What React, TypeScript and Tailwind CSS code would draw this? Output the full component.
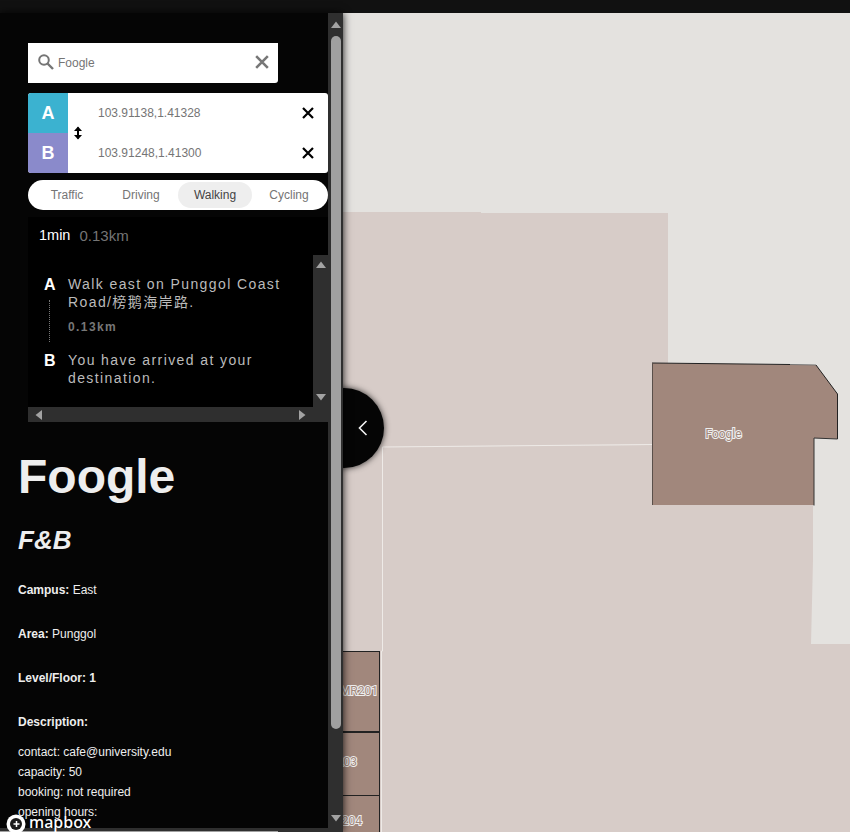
const sans = "font-['Liberation_Sans',Arial,'Noto_Sans_CJK_SC',sans-serif]";

function Arrow({ dir, className = "" }: { dir: "up" | "down" | "left" | "right"; className?: string }) {
  const pts = {
    up: "0,8 5,1.5 10,8",
    down: "0,2 5,8.5 10,2",
    left: "8,0 1.5,5 8,10",
    right: "2,0 8.5,5 2,10",
  }[dir];
  return (
    <svg width="10" height="10" viewBox="0 0 10 10" className={className}>
      <polygon points={pts} fill="#a3a3a3" />
    </svg>
  );
}

function Cross({ size = 12, color = "#000", w = 2.2 }: { size?: number; color?: string; w?: number }) {
  return (
    <svg width={size} height={size} viewBox="0 0 12 12">
      <path d="M1 1 L11 11 M11 1 L1 11" stroke={color} strokeWidth={w} fill="none" />
    </svg>
  );
}

function MapCanvas() {
  const label = { paintOrder: "stroke" as const };
  return (
    <svg width="850" height="832" viewBox="0 0 850 832" className="absolute left-0 top-0">
      <rect width="850" height="832" fill="#e4e2df" />
      <polygon points="340,212 481,212 481,213 668,213 668,363 652,363 652,445 383,447 383,651 340,651" fill="#d7ccc8" />
      <polygon points="383,447 652,445 652,505 813,505 813,560 811,644 850,644 850,832 340,832 340,651 381,651" fill="#d7ccc8" />
      <path d="M381.5 832 L381.5 651 L382.5 651 L382.5 447 L652 444.5" stroke="#eeeae7" strokeWidth="1" fill="none" />
      <polygon points="652.5,363 816,365 837.5,394 837.5,439 814,438 814,505 652.5,505" fill="#a1877c" />
      <path d="M652 363 L790 364.5" stroke="#222" strokeWidth="1" fill="none" />
      <path d="M790 364.5 L816 365" stroke="#777" strokeWidth="1" fill="none" />
      <path d="M816 365 L837.5 394 L837.5 439" stroke="#222" strokeWidth="1" fill="none" />
      <path d="M837.5 439 L814 438 L814 505.5" stroke="#333" strokeWidth="1" fill="none" />
      <path d="M652.5 363 L652.5 505" stroke="#5a4f4a" strokeWidth="1" fill="none" />
      <rect x="340" y="651.5" width="39.5" height="80" fill="#a1877c" stroke="#222" strokeWidth="1" />
      <rect x="340" y="732.5" width="39.5" height="63" fill="#a1877c" stroke="#222" strokeWidth="1" />
      <rect x="340" y="795.5" width="39.5" height="40" fill="#a1877c" stroke="#222" strokeWidth="1" />
      <g fontFamily="Roboto, sans-serif" fontSize="12" fill="#a1877c" stroke="#eee" strokeWidth="2" style={label}>
        <text x="723.5" y="438" textAnchor="middle">Foogle</text>
        <text x="378" y="695" textAnchor="end">MR201</text>
        <text x="357" y="766" textAnchor="end">203</text>
        <text x="362" y="825" textAnchor="end">204</text>
      </g>
    </svg>
  );
}

function Info({ k, v, boldValue }: { k: string; v?: string; boldValue?: boolean }) {
  return (
    <p className="mb-6 h-5 text-xs leading-5 text-[#eee]">
      <b>{k}</b> {boldValue ? <b>{v}</b> : v}
    </p>
  );
}

export default function App() {
  return (
    <div className={`relative h-[832px] w-[850px] overflow-hidden bg-[#e4e2df] ${sans}`}>
      <MapCanvas />
      <div className="absolute left-[304px] top-[388px] flex h-20 w-20 items-center justify-end rounded-full bg-[#050505] pr-[16px] shadow-[0_0_6px_rgba(0,0,0,0.8)]">
        <svg width="10" height="16" viewBox="0 0 10 16">
          <path d="M8.5 1 L1.5 8 L8.5 15" stroke="#f2f2f2" strokeWidth="1.6" fill="none" />
        </svg>
      </div>

      <div className="relative flex h-full flex-col">
        <div className="h-[13px] w-full bg-[#111]" />
        <div className="flex h-[819px] w-[343px] shadow-[0_0_8px_rgba(0,0,0,0.9)]">
          <div className="relative flex w-[328px] flex-col overflow-hidden bg-[#050505]">
            <div className="flex-1 overflow-hidden">
              <div className="flex flex-col pl-7 pt-[30px]">
                <div className="flex h-10 w-[250px] items-center rounded-br-[3px] bg-white">
                  <svg width="18" height="18" viewBox="0 0 18 18" className="ml-[9px] mb-[3px]">
                    <circle cx="7" cy="7" r="4.8" stroke="#757575" strokeWidth="2" fill="none" />
                    <path d="M10.5 10.5 L16 16" stroke="#757575" strokeWidth="2.4" fill="none" />
                  </svg>
                  <span className="ml-[3px] flex-1 text-xs text-[#757575]">Foogle</span>
                  <span className="mr-[9px] mb-[2px] flex">
                    <Cross size={14} color="#777" w={2.2} />
                  </span>
                </div>

                <div className="relative mt-[10px] flex h-20 w-[300px] overflow-hidden rounded-[3px] bg-white">
                  <div className="flex w-10 flex-col text-center text-lg font-bold leading-10 text-white">
                    <div className="h-10 bg-[#3bb2d0]">A</div>
                    <div className="h-10 bg-[#8a8acb]">B</div>
                  </div>
                  <div className="flex items-center pl-[5px]">
                    <svg width="10" height="14" viewBox="0 0 10 14">
                      <path d="M5 1.5 L5 12.5" stroke="#000" strokeWidth="2" />
                      <polygon points="1,5 5,0.5 9,5" fill="#000" />
                      <polygon points="1,9 5,13.5 9,9" fill="#000" />
                    </svg>
                  </div>
                  <div className="absolute left-[70px] top-0 flex h-10 w-[230px] items-center justify-between pr-[14px] text-xs text-[#757575]">
                    <span>103.91138,1.41328</span>
                    <Cross />
                  </div>
                  <div className="absolute left-[70px] top-10 flex h-10 w-[230px] items-center justify-between pr-[14px] text-xs text-[#757575]">
                    <span>103.91248,1.41300</span>
                    <Cross />
                  </div>
                </div>

                <div className="mt-[7px] grid h-[30px] w-[300px] grid-cols-4 items-center rounded-full bg-white px-[2px] text-center text-xs text-[#757575]">
                  <span>Traffic</span>
                  <span>Driving</span>
                  <span className="flex h-[26px] items-center justify-center rounded-full bg-[#eee] text-[#444]">Walking</span>
                  <span>Cycling</span>
                </div>

                <div className="mt-[7px] flex h-[38px] w-[300px] items-center gap-[9px] bg-black pl-[11px] text-[14.5px]">
                  <span className="text-white">1min</span>
                  <span className="text-[15px] text-[#757575]">0.13km</span>
                </div>

                <div className="flex h-[152px] w-[300px] bg-black">
                  <div className="flex-1 pl-[16px] pt-[20px] tracking-[1.4px]">
                    <div className="flex">
                      <div className="flex w-[24px] flex-col">
                        <span className="text-base font-bold leading-5 tracking-normal text-white">A</span>
                        <span className="ml-[5px] mt-[5px] h-[42px] w-0 border-l border-dotted border-[#777]" />
                      </div>
                      <div className="w-[222px] text-sm leading-[18px] text-[#bbb]">
                        <p>Walk east on Punggol Coast Road/榜鹅海岸路.</p>
                        <p className="mt-[8px] text-xs font-bold text-[#777]">0.13km</p>
                      </div>
                    </div>
                    <div className="mt-[9px] flex">
                      <span className="w-[24px] text-base font-bold leading-5 tracking-normal text-white">B</span>
                      <p className="w-[222px] text-sm leading-[18px] text-[#bbb]">You have arrived at your destination.</p>
                    </div>
                  </div>
                  <div className="flex w-[15px] flex-col items-center justify-between bg-[#2f2f2f] py-[5px]">
                    <Arrow dir="up" />
                    <Arrow dir="down" />
                  </div>
                </div>
                <div className="flex h-[15px] w-[300px] items-center justify-between bg-[#2f2f2f] pl-[6px] pr-[21px]">
                  <Arrow dir="left" />
                  <Arrow dir="right" />
                </div>

                <div className="-ml-[10px] mt-[25px] pr-2">
                  <h1 className="text-5xl font-bold leading-[60px] text-[#eee]">Foogle</h1>
                  <h2 className="mt-[16px] h-[34px] text-[26px] font-bold italic leading-[34px] text-[#eee]">F&amp;B</h2>
                  <div className="mt-[23px]">
                    <Info k="Campus:" v="East" />
                    <Info k="Area:" v="Punggol" />
                    <Info k="Level/Floor:" v="1" boldValue />
                    <p className="h-5 text-xs font-bold leading-5 text-[#eee]">Description:</p>
                    <div className="mt-[10px] text-xs leading-5 text-[#eee]">
                      <p>contact: cafe@university.edu</p>
                      <p>capacity: 50</p>
                      <p>booking: not required</p>
                      <p>opening hours:</p>
                    </div>
                  </div>
                </div>
              </div>
            </div>
            <div className="h-[4px] shrink-0 bg-[#2f2f2f] pt-[3px]">
              <div className="h-[1px] w-[278px] bg-[#a0a0a0]" />
            </div>
            <div className="absolute bottom-[-4px] left-[6px] flex items-center gap-[3px]">
              <svg width="20" height="20" viewBox="0 0 20 20">
                <circle cx="10" cy="10" r="9.5" fill="#fff" />
                <circle cx="10" cy="10" r="6" fill="#1a1a1a" />
                <path d="M10.5 7 L10.5 13 M7.5 10 L13.5 10" stroke="#fff" strokeWidth="1.5" />
              </svg>
              <span className="mb-[4px] font-['Noto_Sans',sans-serif] text-[16px] font-medium leading-5 text-white">mapbox</span>
            </div>
          </div>
          <div className="flex w-[15px] flex-col items-start bg-[#2f2f2f] pl-[3px]">
            <Arrow dir="up" className="mt-[7px] shrink-0" />
            <div className="mt-[6px] h-[693px] w-[10px] shrink-0 rounded-full bg-[#a0a0a0]" />
            <div className="flex-1" />
            <Arrow dir="down" className="mb-[9px] shrink-0" />
          </div>
        </div>
      </div>
    </div>
  );
}
